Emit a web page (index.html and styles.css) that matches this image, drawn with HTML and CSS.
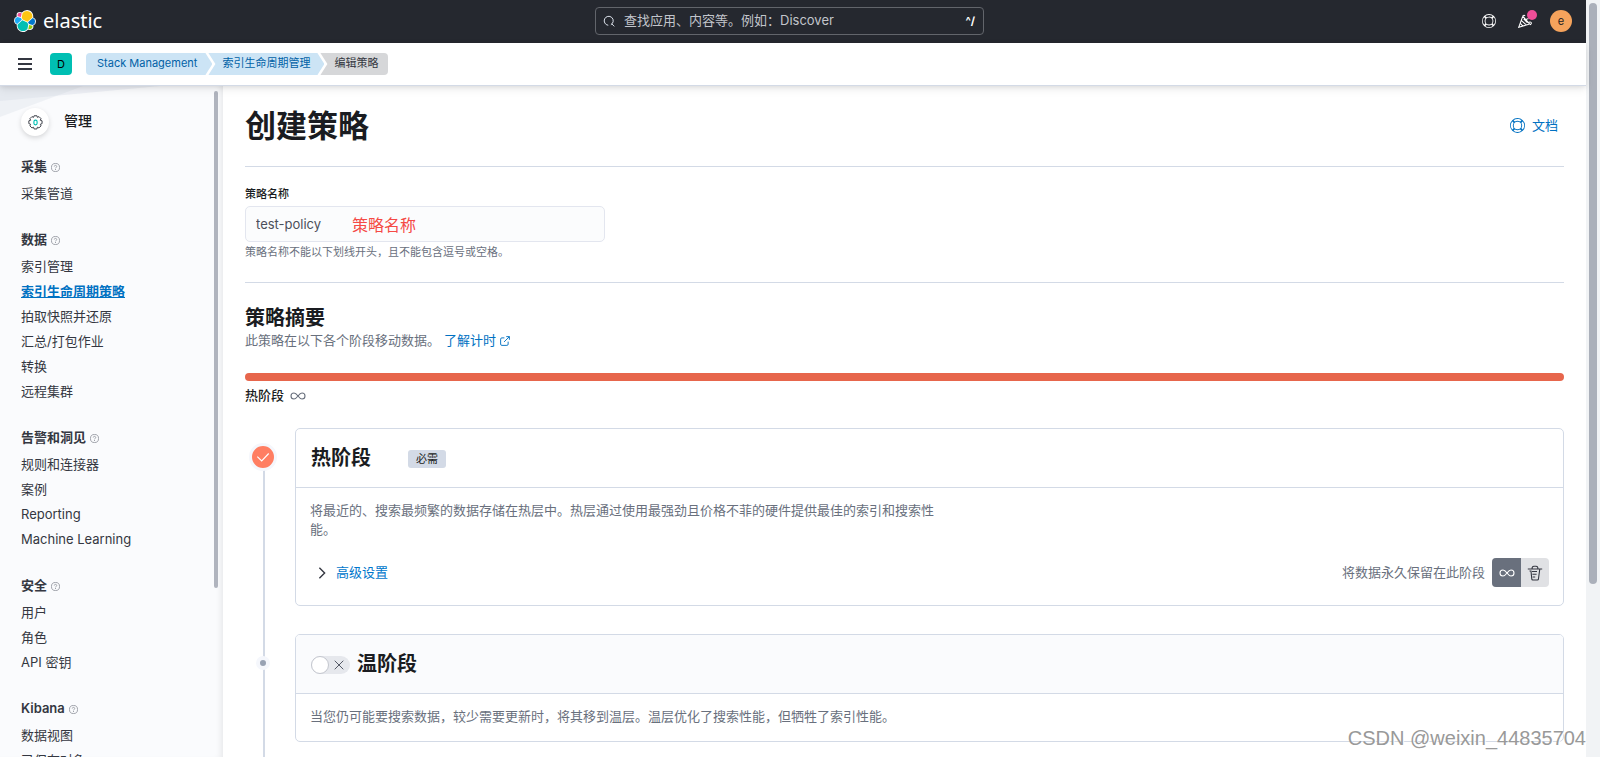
FILE: index.html
```html
<!DOCTYPE html>
<html lang="zh-CN">
<head>
<meta charset="utf-8">
<title>创建策略 - Elastic</title>
<link rel="stylesheet" href="styles.css">
</head>
<body>
<svg class="defs" aria-hidden="true">
  <symbol id="i-help" viewBox="0 0 16 16"><path fill="currentColor" fill-rule="evenodd" d="M13.6 12.186l-1.357-1.358c-.025-.025-.058-.034-.084-.056.53-.794.84-1.746.84-2.773a4.977 4.977 0 00-.84-2.772c.026-.02.059-.03.084-.056L13.6 3.813a6.96 6.96 0 010 8.373zM8 15A6.956 6.956 0 013.814 13.6l1.358-1.358c.025-.025.034-.057.055-.084C6.02 12.688 6.974 13 8 13a4.978 4.978 0 002.773-.84c.02.026.03.058.056.083l1.357 1.358A6.956 6.956 0 018 15zm-5.601-2.813a6.963 6.963 0 010-8.373l1.359 1.358c.024.025.057.035.084.056A4.97 4.97 0 003 8c0 1.027.31 1.98.842 2.773-.027.022-.06.031-.084.056l-1.36 1.358zm5.6-.187A4 4 0 118 4a4 4 0 010 8zM8 1c1.573 0 3.019.525 4.187 1.4l-1.357 1.358c-.025.025-.035.057-.056.084A4.979 4.979 0 008 3a4.979 4.979 0 00-2.773.842c-.021-.027-.03-.059-.055-.084L3.814 2.4A6.957 6.957 0 018 1zm0-1a8.001 8.001 0 10.003 16.002A8.001 8.001 0 008 0z"/></symbol>
  <symbol id="i-question" viewBox="0 0 16 16"><g fill="none" stroke="currentColor" stroke-width="1.3"><circle cx="8" cy="8" r="7.2"/><path d="M5.8 6.3C5.8 4.9 6.8 4.2 8 4.2s2.2.8 2.2 2c0 1.700-2.200 1.700-2.200 3.400"/></g><circle cx="8" cy="11.700" r=".9" fill="currentColor"/></symbol>
  <symbol id="i-infinity" viewBox="0 0 16 16"><path fill="none" stroke="currentColor" stroke-width="1.100" d="M8 8C6.700 6.300 5.600 5 4 5a3 3 0 000 6c1.600 0 2.700-1.300 4-3s2.400-3 4-3a3 3 0 010 6c-1.600 0-2.700-1.300-4-3z"/></symbol>
</svg>
<div class="window">
  <div class="app">
    <header class="topbar">
      <a class="brand" href="#" aria-label="elastic">
        <svg class="brand-mark" viewBox="0 0 32 32" aria-hidden="true">
          <path fill="#fff" d="M32 16.77c0-2.68-1.664-5.02-4.161-5.936.111-.571.166-1.155.166-1.744C28.005 4.078 23.927 0 18.917 0a9.1 9.1 0 00-7.381 3.789 4.79 4.79 0 00-2.966-1.016 4.84 4.84 0 00-4.834 4.834c0 .583.104 1.154.305 1.688A6.38 6.38 0 000 15.25c0 2.691 1.67 5.036 4.175 5.95a9.1 9.1 0 00-.166 1.744c0 4.998 4.064 9.063 9.059 9.063 2.932 0 5.663-1.403 7.36-3.793a4.77 4.77 0 002.973 1.033c2.665 0 4.834-2.168 4.834-4.834 0-.583-.104-1.153-.305-1.688A6.38 6.38 0 0032 16.77"/>
          <path fill="#fec514" d="M12.575 13.787l7.01 3.199 7.072-6.2a7.9 7.9 0 00.153-1.564 7.9 7.9 0 00-7.886-7.89 7.9 7.9 0 00-6.5 3.428l-1.178 6.104z"/>
          <path fill="#00bfb3" d="M5.31 21.194a8 8 0 00-.155 1.58c0 4.354 3.552 7.897 7.919 7.897 2.627 0 5.087-1.298 6.56-3.473l1.167-6.088-1.557-2.99-7.035-3.209z"/>
          <path fill="#f04e98" d="M5.268 9.077l4.806 1.135 1.053-5.467a3.8 3.8 0 00-2.31-.777 3.793 3.793 0 00-3.549 5.109"/>
          <path fill="#1ba9f5" d="M4.85 10.221A5.33 5.33 0 001.228 15.25a5.32 5.32 0 003.428 4.978l6.741-6.1-1.238-2.646z"/>
          <path fill="#93c90e" d="M20.872 27.195a3.79 3.79 0 002.292.784 3.793 3.793 0 003.548-5.109l-4.8-1.123z"/>
          <path fill="#07c" d="M21.825 20.483l5.286 1.234a5.34 5.34 0 003.622-5.029 5.32 5.32 0 00-3.436-4.97l-6.914 6.061z"/>
        </svg>
        <span>elastic</span>
      </a>
      <label class="search">
        <svg class="icon-12" viewBox="0 0 16 16" aria-hidden="true"><path fill="none" stroke="currentColor" stroke-width="1.300" d="M10.500 13a6 6 0 10-3.500 .7M11.500 11.500L15 15.200"/></svg>
        <input type="search" aria-label="搜索" placeholder="查找应用、内容等。例如：Discover">
        <kbd>^/</kbd>
      </label>
      <nav class="tools">
        <button class="tool" aria-label="帮助"><svg class="icon-14"><use href="#i-help"/></svg></button>
        <button class="tool news" aria-label="新闻"><svg class="icon-14" viewBox="0 0 16 16" aria-hidden="true"><g fill="none" stroke="currentColor" stroke-width="1.200"><path d="M5.500 2.500L.8 15.200l12.500-3.700zM4 7.500l5.500 5M3 11l2.500 2.800M6.500 5.500l4.200 4.500M5.500 2.500c.5-1.500 2-1.500 2.500-.3M9 7.500c.3-1.600 1.400-2.300 3-2.100M12.500 9.500c1.500-.8 3-.2 2.700 1.300l-1.200 1.700"/></g></svg></button>
        <button class="avatar" aria-label="用户菜单">e</button>
      </nav>
    </header>
    <div class="subbar">
      <button class="menu" aria-label="菜单"><span></span><span></span><span></span></button>
      <button class="space">D</button>
      <nav class="crumbs" aria-label="Breadcrumbs">
        <a class="crumb first" href="#">Stack Management</a>
        <a class="crumb middle" href="#">索引生命周期管理</a>
        <span class="crumb last">编辑策略</span>
      </nav>
    </div>
    <div class="columns">
      <aside class="sidebar">
        <svg class="facets" viewBox="0 0 223 32" aria-hidden="true"><path fill="#d3dae6" fill-opacity=".3" d="M0 0h83L0 31z"/><path fill="#d3dae6" fill-opacity=".35" d="M0 0h160L0 15z"/></svg>
        <div class="side-title">
          <span class="side-icon"><svg viewBox="0 0 16 16" aria-hidden="true"><path fill="none" stroke="#343741" stroke-width="1" stroke-linejoin="round" d="M6.500 .8h3l.5 1.700 1.700-.8 2.200 2.200-.8 1.700 1.900.6v3l-1.900.7.8 1.700-2.200 2.200-1.700-.8-.5 1.900h-3L5.900 13l-1.700.8L2 11.600l.8-1.700L.9 9.200v-3l1.900-.6L2 3.900l2.200-2.200 1.700.8z"/><rect x="6.300" y="5.500" width="3.400" height="5" rx="1.600" fill="none" stroke="#00bfb3" stroke-width="1.200"/></svg></span>
          <h2>管理</h2>
        </div>
        <nav class="side-nav">
          <section><h3>采集 <svg><use href="#i-question"/></svg></h3>
            <ul><li><a href="#">采集管道</a></li></ul></section>
          <section><h3>数据 <svg><use href="#i-question"/></svg></h3>
            <ul><li><a href="#">索引管理</a></li><li><a class="current" href="#">索引生命周期策略</a></li><li><a href="#">拍取快照并还原</a></li><li><a href="#">汇总/打包作业</a></li><li><a href="#">转换</a></li><li><a href="#">远程集群</a></li></ul></section>
          <section><h3>告警和洞见 <svg><use href="#i-question"/></svg></h3>
            <ul><li><a href="#">规则和连接器</a></li><li><a href="#">案例</a></li><li><a href="#">Reporting</a></li><li><a href="#">Machine Learning</a></li></ul></section>
          <section><h3>安全 <svg><use href="#i-question"/></svg></h3>
            <ul><li><a href="#">用户</a></li><li><a href="#">角色</a></li><li><a href="#">API 密钥</a></li></ul></section>
          <section><h3>Kibana <svg><use href="#i-question"/></svg></h3>
            <ul><li><a href="#">数据视图</a></li><li><a href="#">已保存对象</a></li></ul></section>
        </nav>
        <div class="side-scroll"></div>
      </aside>
      <main class="content">
        <div class="page-head">
          <h1>创建策略</h1>
          <a class="docs" href="#"><svg class="icon-15"><use href="#i-help"/></svg>文档</a>
        </div>
        <form class="name-form">
          <label for="policy-name">策略名称</label>
          <div class="field">
            <input id="policy-name" type="text" value="test-policy">
            <span class="note">策略名称</span>
          </div>
          <p>策略名称不能以下划线开头，且不能包含逗号或空格。</p>
        </form>
        <section class="summary">
          <h2>策略摘要</h2>
          <p>此策略在以下各个阶段移动数据。 <a href="#">了解计时<svg class="icon-10" viewBox="0 0 16 16" aria-hidden="true"><path fill="none" stroke="currentColor" stroke-width="1.500" d="M7 3H3a2 2 0 00-2 2v8a2 2 0 002 2h8a2 2 0 002-2V9M10 1h5v5M15 1L6.500 9.500"/></svg></a></p>
          <div class="bar"></div>
          <div class="bar-label">热阶段 <svg class="icon-16"><use href="#i-infinity"/></svg></div>
        </section>
        <div class="phases">
          <section class="phase">
            <div class="rail hot"><span class="done"><svg class="icon-14" viewBox="0 0 16 16" aria-hidden="true"><path fill="none" stroke="#fff" stroke-width="1.300" d="M1.500 7.500l5 5L14.500 4"/></svg></span></div>
            <div class="panel">
              <div class="panel-head"><h2>热阶段</h2><span class="badge">必需</span></div>
              <div class="panel-body">
                <p>将最近的、搜索最频繁的数据存储在热层中。热层通过使用最强劲且价格不菲的硬件提供最佳的索引和搜索性能。</p>
                <div class="settings">
                  <button class="advanced"><svg class="icon-14" viewBox="0 0 16 16" aria-hidden="true"><path fill="none" stroke="#343741" stroke-width="1.600" d="M5 2l6 6-6 6"/></svg>高级设置</button>
                  <span class="keep">将数据永久保留在此阶段</span>
                  <div class="toggle-group">
                    <button class="selected" aria-label="永久保留"><svg class="icon-16"><use href="#i-infinity"/></svg></button>
                    <button aria-label="删除"><svg class="icon-16" viewBox="0 0 16 16" aria-hidden="true"><path fill="none" stroke="currentColor" stroke-width="1.100" d="M.8 4h14.400M5 4c0-2 .8-2.800 2-2.800h2c1.200 0 2 .8 2 2.800M2.500 6h1.500l.8 8.200c.1.500.4.800.9.800h4.800c.5 0 .8-.3.9-.8L12.800 4M5 6.500h5M5.400 9.200h4.200M5.700 12h2.500"/></svg></button>
                  </div>
                </div>
              </div>
            </div>
          </section>
          <section class="phase">
            <div class="rail"><span class="dot"></span></div>
            <div class="panel">
              <div class="panel-head muted">
                <button class="switch" role="switch" aria-checked="false" aria-label="温阶段"><span class="knob"></span><svg class="icon-10" viewBox="0 0 10 10" aria-hidden="true"><path fill="none" stroke="#535966" d="M.7.7l8.600 8.600M9.300.7L.7 9.300"/></svg></button>
                <h2>温阶段</h2>
              </div>
              <div class="panel-body short">
                <p>当您仍可能要搜索数据，较少需要更新时，将其移到温层。温层优化了搜索性能，但牺牲了索引性能。</p>
              </div>
            </div>
          </section>
        </div>
      </main>
    </div>
  </div>
  <div class="page-scroll"><div class="thumb"></div></div>
  <div class="watermark">CSDN @weixin_44835704</div>
</div>
</body>
</html>
```

FILE: styles.css
```css
* { box-sizing: border-box; }

body {
  margin: 0;
  font: 13px/19px Inter, "Noto Sans CJK SC", sans-serif;
  color: #343741;
  background: #fff;
}

h1, h2, h3, p, ul { margin: 0; padding: 0; }
ul { list-style: none; }
a { color: #0071c2; text-decoration: none; }
button { border: 0; padding: 0; background: none; font: inherit; color: inherit; }
input { font: inherit; min-width: 0; }
svg { display: block; flex: none; }

.defs { display: none; }
.icon-10 { width: 10px; height: 10px; }
.icon-12 { width: 12px; height: 12px; }
.icon-14 { width: 14px; height: 14px; }
.icon-15 { width: 15px; height: 15px; }
.icon-16 { width: 16px; height: 16px; }

.window {
  position: relative;
  display: grid;
  grid-template-columns: 1fr 14px;
  height: 100vh;
  overflow: hidden;
}
.app { display: flex; flex-direction: column; min-width: 0; min-height: 0; }

/* Top bar */
.topbar {
  display: grid;
  grid-template-columns: 1fr auto 1fr;
  align-items: center;
  height: 43px;
  flex: none;
  padding: 0 14px 2px;
  background: #25282f;
  color: #fff;
}
.brand {
  display: flex;
  align-items: center;
  gap: 7px;
  color: #fff;
  font: 20px/28px "Noto Sans", sans-serif;
}
.brand-mark { width: 22px; height: 22px; }
.search {
  display: flex;
  align-items: center;
  gap: 9px;
  width: 389px;
  height: 28px;
  margin-right: 7px;
  padding: 0 8px 0 7px;
  border: 1px solid #62656b;
  border-radius: 4px;
  color: #dfe5ef;
}
.search input {
  flex: 1;
  padding: 0;
  border: 0;
  outline: 0;
  background: none;
  color: #fff;
}
.search input::placeholder { color: #c2c5cb; opacity: 1; }
.search kbd { font: bold 11px/16px Inter, sans-serif; color: #fff; }
.tools { display: flex; align-items: center; justify-content: flex-end; gap: 22px; }
.tool { position: relative; }
.news::after {
  content: "";
  position: absolute;
  top: -4px;
  right: -5px;
  width: 10px;
  height: 10px;
  border-radius: 50%;
  background: #f04e98;
}
.avatar {
  width: 22px;
  height: 22px;
  margin-left: -4px;
  border-radius: 50%;
  background: #f5a35c;
  color: #1a1c21;
  font-size: 11px;
  line-height: 22px;
}

/* Breadcrumb bar */
.subbar {
  position: relative;
  z-index: 1;
  display: flex;
  align-items: center;
  flex: none;
  height: 43px;
  padding: 0 18px;
  background: #fff;
  border-bottom: 1px solid #d3dae6;
  box-shadow: 0 1px 5px rgba(0, 0, 0, .1), 0 4px 9px rgba(0, 0, 0, .06);
}
.menu { display: grid; gap: 3px; width: 14px; }
.menu span { height: 2px; background: #343741; }
.space {
  width: 22px;
  height: 22px;
  margin: 0 14px 0 18px;
  border-radius: 4px;
  background: #00bfb3;
  color: #000;
  font-size: 11px;
}
.crumbs { display: flex; font-size: 11px; }
.crumb { height: 22px; background: #cce4f5; color: #0061a6; line-height: 20px; white-space: nowrap; }
.first {
  padding: 0 15px 0 11px;
  border-radius: 4px 0 0 4px;
  clip-path: polygon(0 0, calc(100% - 7px) 0, 100% 50%, calc(100% - 7px) 100%, 0 100%);
}
.middle {
  margin-left: -4px;
  padding: 0 14px;
  clip-path: polygon(0 0, calc(100% - 7px) 0, 100% 50%, calc(100% - 7px) 100%, 0 100%, 7px 50%);
}
.last {
  margin-left: -4px;
  padding: 0 10px 0 14px;
  border-radius: 0 4px 4px 0;
  background: #d6d7d9;
  color: #343741;
  clip-path: polygon(0 0, 100% 0, 100% 100%, 0 100%, 7px 50%);
}

/* Sidebar */
.columns { display: grid; grid-template-columns: 223px 1fr; flex: 1; min-height: 0; }
.sidebar {
  position: relative;
  overflow: hidden;
  padding: 22px 22px 0 21px;
  background: #fafbfd;
  box-shadow: inset -6px 0 6px -4px rgba(0, 0, 0, .08);
}
.facets { position: absolute; inset: 0 0 auto; width: 223px; height: 32px; }
.side-title { position: relative; display: flex; align-items: center; gap: 15px; height: 28px; }
.side-title h2 { padding-bottom: 2px; font-size: 14px; font-weight: 500; line-height: 22px; color: #1a1c21; }
.side-icon {
  display: grid;
  place-items: center;
  width: 28px;
  height: 28px;
  border-radius: 50%;
  background: #fff;
  box-shadow: 0 2px 5px rgba(0, 0, 0, .15);
}
.side-icon svg { width: 15px; height: 15px; }
.side-nav { padding-top: 17px; }
.side-nav section { margin-bottom: 20px; }
.side-nav h3 {
  display: flex;
  align-items: center;
  gap: 4px;
  margin-bottom: 2px;
  font-size: 13px;
  font-weight: 600;
  line-height: 26px;
}
.side-nav h3 svg { width: 9px; height: 9px; color: #81858f; margin-top: 2px; }
.side-nav li { line-height: 25px; white-space: nowrap; }
.side-nav a { color: #343741; }
.side-nav a.current { color: #0071c2; font-weight: 700; text-decoration: underline; }
.side-scroll {
  position: absolute;
  top: 5px;
  right: 5px;
  width: 4px;
  height: 74%;
  border-radius: 4px;
  background: #b0b4be;
}

/* Main content */
.content { min-width: 0; padding: 22px 22px 0; overflow: hidden; }
.page-head {
  display: flex;
  align-items: center;
  justify-content: space-between;
  padding: 0 6px 22px 0;
  border-bottom: 1px solid #d3dae6;
}
h1 { font-size: 31px; line-height: 36px; font-weight: 700; color: #1a1c21; }
.docs { display: flex; align-items: center; gap: 7px; padding-bottom: 2px; }

.name-form { padding: 18px 0 22px; border-bottom: 1px solid #d3dae6; }
.name-form label { display: block; font-size: 11px; line-height: 18px; font-weight: 500; color: #1a1c21; }
.field { position: relative; max-width: 360px; margin: 3px 0 2px; }
.field input {
  display: block;
  width: 100%;
  height: 36px;
  padding: 0 10px;
  border: 1px solid #e3e6ef;
  border-radius: 5px;
  background: #fbfcfd;
  color: #4b4f5a;
}
.note {
  position: absolute;
  left: 107px;
  top: 0;
  color: #f54a45;
  font: 16px/37px "Noto Sans CJK SC", sans-serif;
}
.name-form p { font-size: 11px; line-height: 16px; color: #69707d; }

.summary { padding-top: 23px; }
.summary h2, .panel-head h2 { font-size: 20px; line-height: 25px; font-weight: 700; color: #1a1c21; }
.summary p { display: flex; gap: 4px; color: #69707d; }
.summary p a { display: flex; align-items: center; gap: 4px; }
.bar { height: 8px; margin: 23px 0 5px; border-radius: 4px; background: #e7664c; }
.bar-label { display: flex; align-items: center; gap: 6px; font-weight: 500; color: #1a1c21; }
.bar-label svg { color: #69707d; }

/* Phases */
.phases { padding-top: 23px; }
.phase { display: grid; grid-template-columns: 36px 1fr; column-gap: 14px; }
.rail {
  display: flex;
  justify-content: center;
  align-items: flex-start;
  padding-top: 22px;
  background: linear-gradient(#d3dae6, #d3dae6) 18px 0 / 2px 100% no-repeat;
}
.rail.hot { padding-top: 15px; background-position: 18px 42px; }
.done, .dot { display: grid; place-items: center; border: 3px solid #f5f7fc; border-radius: 50%; }
.done { width: 28px; height: 28px; background: #ff7e62; }
.dot { width: 14px; height: 14px; background: #98a2b3; border-width: 4px; }
.panel { margin-bottom: 28px; border: 1px solid #d3dae6; border-radius: 5px; overflow: hidden; }
.panel-head { display: flex; align-items: center; height: 59px; padding: 1px 15px 0; border-bottom: 1px solid #d3dae6; }
.muted { background: #fafbfd; }
.badge {
  margin-left: 37px;
  padding: 0 8px;
  border-radius: 3px;
  background: #d3dae6;
  color: #1a1c21;
  font-size: 11px;
  line-height: 18px;
}
.panel-body { padding: 13px 14px 18px; }
.panel-body p { max-width: 630px; color: #69707d; }
.panel-body.short { padding-bottom: 15px; }
.settings { display: flex; align-items: center; margin-top: 19px; }
.advanced { display: flex; align-items: center; gap: 7px; margin: 0 auto 0 5px; color: #0077cc; }
.keep { margin-right: 7px; color: #69707d; }
.toggle-group { display: flex; border-radius: 4px; overflow: hidden; background: #e0e1e4; }
.toggle-group button { display: grid; place-items: center; width: 28px; height: 29px; color: #343741; }
.toggle-group .selected { width: 29px; background: #69707d; color: #fff; }
.switch {
  display: flex;
  align-items: center;
  gap: 5px;
  width: 39px;
  height: 18px;
  margin-right: 7px;
  border-radius: 9px;
  background: #e6e8ed;
}
.knob { width: 18px; height: 18px; border: 1px solid #c3c6ce; border-radius: 50%; background: #fff; }

/* Page scrollbar and watermark */
.page-scroll { padding: 3px 3px 0; background: #f1f3f5; }
.thumb { height: 77%; border-radius: 4px; background: #abb0ba; }
.watermark {
  position: absolute;
  right: 14px;
  bottom: 5px;
  font: 20px/28px "Liberation Sans", sans-serif;
  color: #999;
  text-shadow: 1px 1px 0 #fff;
}
```
